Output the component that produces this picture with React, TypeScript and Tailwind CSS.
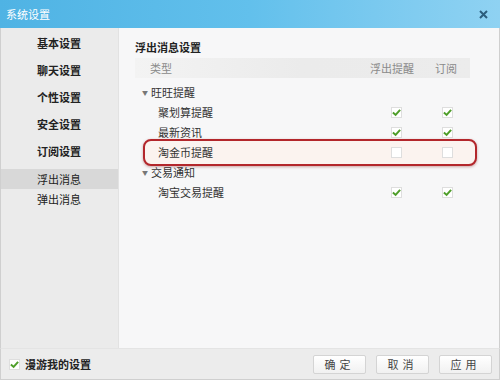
import React from "react";

const FONT = { fontFamily: '"Noto Sans CJK SC", "Noto Sans", sans-serif' };

const NAV = ["基本设置", "聊天设置", "个性设置", "安全设置", "订阅设置"];

function Check({ on }: { on: boolean }) {
  return (
    <span className="flex h-[11px] w-[11px] items-center justify-center border border-[#dedede] bg-white">
      {on && (
        <svg width="10" height="9" viewBox="0 0 10 9">
          <path d="M1 4.5 L4 7.2 L9 1.5" fill="none" stroke="#4f9e2a" strokeWidth="2.2" />
        </svg>
      )}
    </span>
  );
}

function Group({ label }: { label: string }) {
  return (
    <div className="flex h-[20px] items-center text-[11px] text-[#333]">
      <span className="ml-[7px] mr-[3px] text-[6px] text-[#777]">▼</span>
      <span>{label}</span>
    </div>
  );
}

function Row({ label, on }: { label: string; on: boolean }) {
  return (
    <div className="flex h-[20px] items-center text-[11px] text-[#333]">
      <span className="w-[256px] pl-[23px]">{label}</span>
      <Check on={on} />
      <span className="ml-[40px]">
        <Check on={on} />
      </span>
    </div>
  );
}

function Button({ children }: { children: React.ReactNode }) {
  return (
    <button
      type="button"
      className="flex h-[19px] w-[53px] items-center justify-center rounded-[2px] border border-[#d4d4d4] bg-gradient-to-b from-white to-[#f1f1f1] text-[11px] tracking-[4px] text-[#444]"
    >
      {children}
    </button>
  );
}

export default function App() {
  return (
    <div style={FONT} className="flex h-[380px] w-[500px] flex-col overflow-hidden bg-[#ececec]">
      {/* Title bar */}
      <div className="flex h-[28px] items-center justify-between bg-gradient-to-r from-[#4fb3e4] via-[#62c0ec] to-[#8fd2f2] pl-[6px] pr-[12px]">
        <span className="text-[11px] text-white">系统设置</span>
        <svg width="9" height="9" viewBox="0 0 9 9">
          <path d="M1 1 L8 8 M8 1 L1 8" stroke="#2c5d7c" strokeWidth="2" />
        </svg>
      </div>

      {/* Body */}
      <div className="flex h-[320px] border-l border-r border-[#cfcfcf]">
        {/* Sidebar */}
        <aside className="w-[117px] bg-[#ebebeb] pt-[2px] text-[11px] text-[#222]">
          {NAV.map((n) => (
            <div key={n} className="flex h-[27px] items-center pl-[36px] font-bold">
              {n}
            </div>
          ))}
          <div className="mt-[4px] flex h-[20px] items-center bg-[#d8d8d8] pl-[36px]">浮出消息</div>
          <div className="flex h-[20px] items-center pl-[36px]">弹出消息</div>
        </aside>

        {/* Content */}
        <main className="flex-1 border-l border-[#e2e2e2] bg-[#f7f7f8] pl-[16px] pt-[11px]">
          <h2 className="h-[16px] text-[11px] font-bold leading-[16px] text-[#222]">浮出消息设置</h2>
          <div className="mt-[3px] flex h-[20px] w-[335px] items-center bg-gradient-to-r from-[#f3f3f3] via-[#ebebeb] to-[#ececec] text-[11px] text-[#8a8a8a]">
            <span className="w-[235px] pl-[15px]">类型</span>
            <span className="w-[44px]">浮出提醒</span>
            <span className="ml-[21px]">订阅</span>
          </div>

          <div className="mt-[4px] w-[335px]">
            <Group label="旺旺提醒" />
            <Row label="聚划算提醒" on />
            <Row label="最新资讯" on />
            <div className="relative">
              <div className="absolute bottom-[-4px] left-[8px] right-[-7px] top-[-3px] rounded-[8px] border-[2px] border-[#b3262b] bg-[#fbf3ef] shadow-[0_1px_3px_rgba(120,0,0,0.35)]" />
              <div className="relative">
                <Row label="淘金币提醒" on={false} />
              </div>
            </div>
            <Group label="交易通知" />
            <Row label="淘宝交易提醒" on />
          </div>
        </main>
      </div>

      {/* Footer */}
      <div className="flex h-[32px] items-center justify-between border-x border-b border-t border-[#cfcfcf] border-t-[#e4e4e4] bg-[#ececec] pl-[8px] pr-[7px]">
        <div className="flex items-center gap-[5px] text-[11px] font-bold text-[#222]">
          <Check on />
          <span>漫游我的设置</span>
        </div>
        <div className="flex gap-[10px]">
          <Button>确定</Button>
          <Button>取消</Button>
          <Button>应用</Button>
        </div>
      </div>
    </div>
  );
}
